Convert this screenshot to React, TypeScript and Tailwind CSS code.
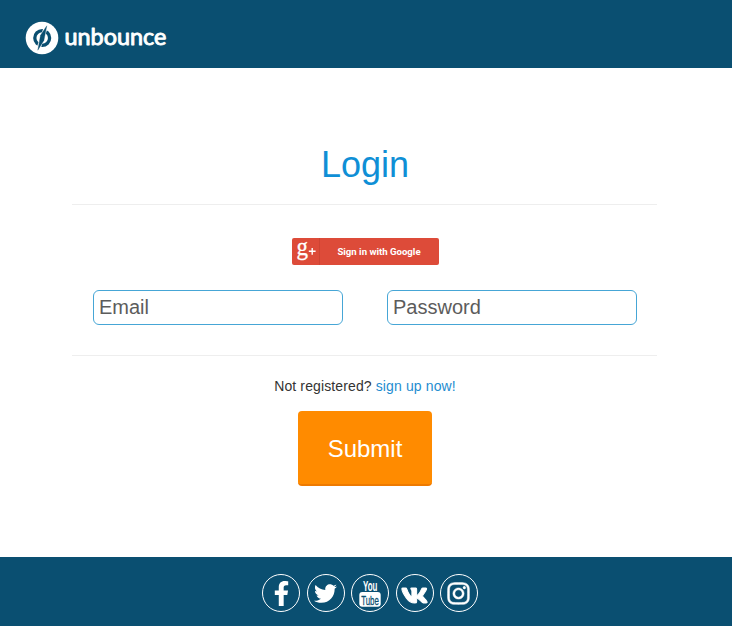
import type { ReactNode } from "react";
import { FaFacebookF, FaTwitter, FaVk, FaInstagram } from "react-icons/fa";

function Logo() {
  return (
    <div className="flex items-center">
      <svg width="34" height="34" viewBox="0 0 34 34">
        <circle cx="17" cy="17" r="16.3" fill="#fff" />
        <circle cx="17.2" cy="17" r="7.4" fill="none" stroke="#0a4f71" strokeWidth="3.3" />
        <path d="M21.4 4.5 L13 29" stroke="#fff" strokeWidth="4" />
        <path d="M21.8 4.8 L18.9 19.5 L12.8 29.2 L15.5 14.3 Z" fill="#0a4f71" stroke="#0a4f71" strokeWidth="0.3" />
      </svg>
      <svg width="106" height="34" viewBox="0 0 106 34" className="ml-[3px] overflow-visible">
        <text x="2.4" y="23.5" textLength="102" lengthAdjust="spacingAndGlyphs" fill="#fff" stroke="#fff" strokeWidth="0.9" strokeLinejoin="round" className="font-[Lato,sans-serif] text-[23px]">unbounce</text>
      </svg>
    </div>
  );
}

function GooglePlusMark() {
  return (
    <svg width="27" height="27" viewBox="0 0 27 27">
      <text x="4.6" y="17.2" textLength="11.5" lengthAdjust="spacingAndGlyphs" fill="#fff" stroke="#fff" strokeWidth="0.3" className="font-['Liberation_Serif',serif] text-[25px] leading-none">g</text>
      <path d="M16.8 13.3H23.6M20.2 9.9V16.7" fill="none" stroke="#fff" strokeWidth="1.4" />
    </svg>
  );
}

function YouTubeMark() {
  return (
    <svg width="24" height="32" viewBox="0 0 24 32" className="overflow-visible">
      <text x="5" y="13.6" textLength="14.4" lengthAdjust="spacingAndGlyphs" fill="#fff" className="font-['Liberation_Sans',sans-serif] text-[14px] font-bold">You</text>
      <rect x="1.3" y="15" width="21.4" height="14.8" rx="3" fill="#fff" />
      <text x="3.2" y="27.5" textLength="17.6" lengthAdjust="spacingAndGlyphs" fill="#0a4f71" stroke="#0a4f71" strokeWidth="0.3" className="font-['Liberation_Sans',sans-serif] text-[13.5px]">Tube</text>
    </svg>
  );
}

function Social({ label, children }: { label: string; children: ReactNode }) {
  return (
    <a href="#" aria-label={label} className="flex size-[38px] items-center justify-center rounded-full border border-white text-white">
      {children}
    </a>
  );
}

const field =
  "h-[35px] w-[250px] rounded-[6px] border border-[#46a6d6] bg-white px-[5.5px] text-[20px] text-[#555] outline-none placeholder:text-[#5c5c5c]";

export default function App() {
  return (
    <div className="flex h-[626px] w-[732px] flex-col overflow-hidden bg-white font-['Liberation_Sans',Arial,sans-serif] text-[14px] text-[#333]">
      <header className="flex h-[68px] shrink-0 items-center bg-[#0a4f71] pl-[25px] pt-[8px]">
        <Logo />
      </header>
      <main className="ml-[72px] flex w-[585px] flex-1 flex-col items-center">
        <h1 className="mt-[77px] pl-[1px] text-[36px] leading-[40px] text-[#0f8fd6]">Login</h1>
        <hr className="mt-[19px] w-full border-[#eee]" />
        <button className="ml-[1px] mt-[33px] flex h-[27px] w-[147px] overflow-hidden rounded-[2px] bg-[#dd4b39] text-white">
          <span className="w-[28px] border-r border-[#ce4433]">
            <GooglePlusMark />
          </span>
          <span className="flex-1 text-center font-[Roboto,sans-serif] text-[9.6px] font-bold leading-[27px]">Sign in with Google</span>
        </button>
        <form className="mt-[25px] flex gap-[44px]">
          <input className={field} placeholder="Email" />
          <input className={field} type="password" placeholder="Password" />
        </form>
        <hr className="mt-[30px] w-full border-[#eee]" />
        <p className="mt-[20px] pl-[1px] leading-[20px] tracking-[0.12px]">
          Not registered? <a href="#" className="text-[#1f8dd0]">sign up now!</a>
        </p>
        <button className="mt-[15px] h-[75px] w-[134px] rounded-[4px] border-b-2 border-[#ee7a00] bg-[#ff8b00] pl-[1px] pt-[2px] text-[24px] text-white">Submit</button>
      </main>
      <footer className="flex h-[69px] shrink-0 justify-center gap-[6.5px] bg-[#0a4f71] pl-[8px] pt-[17px]">
        <Social label="Facebook"><FaFacebookF size={25} /></Social>
        <Social label="Twitter"><FaTwitter size={23} /></Social>
        <Social label="YouTube"><YouTubeMark /></Social>
        <Social label="VK"><FaVk size={27} stroke="currentColor" strokeWidth={22} className="mt-[5px]" /></Social>
        <Social label="Instagram"><FaInstagram size={25} stroke="currentColor" strokeWidth={10} className="mr-[1px] mt-px" /></Social>
      </footer>
    </div>
  );
}
